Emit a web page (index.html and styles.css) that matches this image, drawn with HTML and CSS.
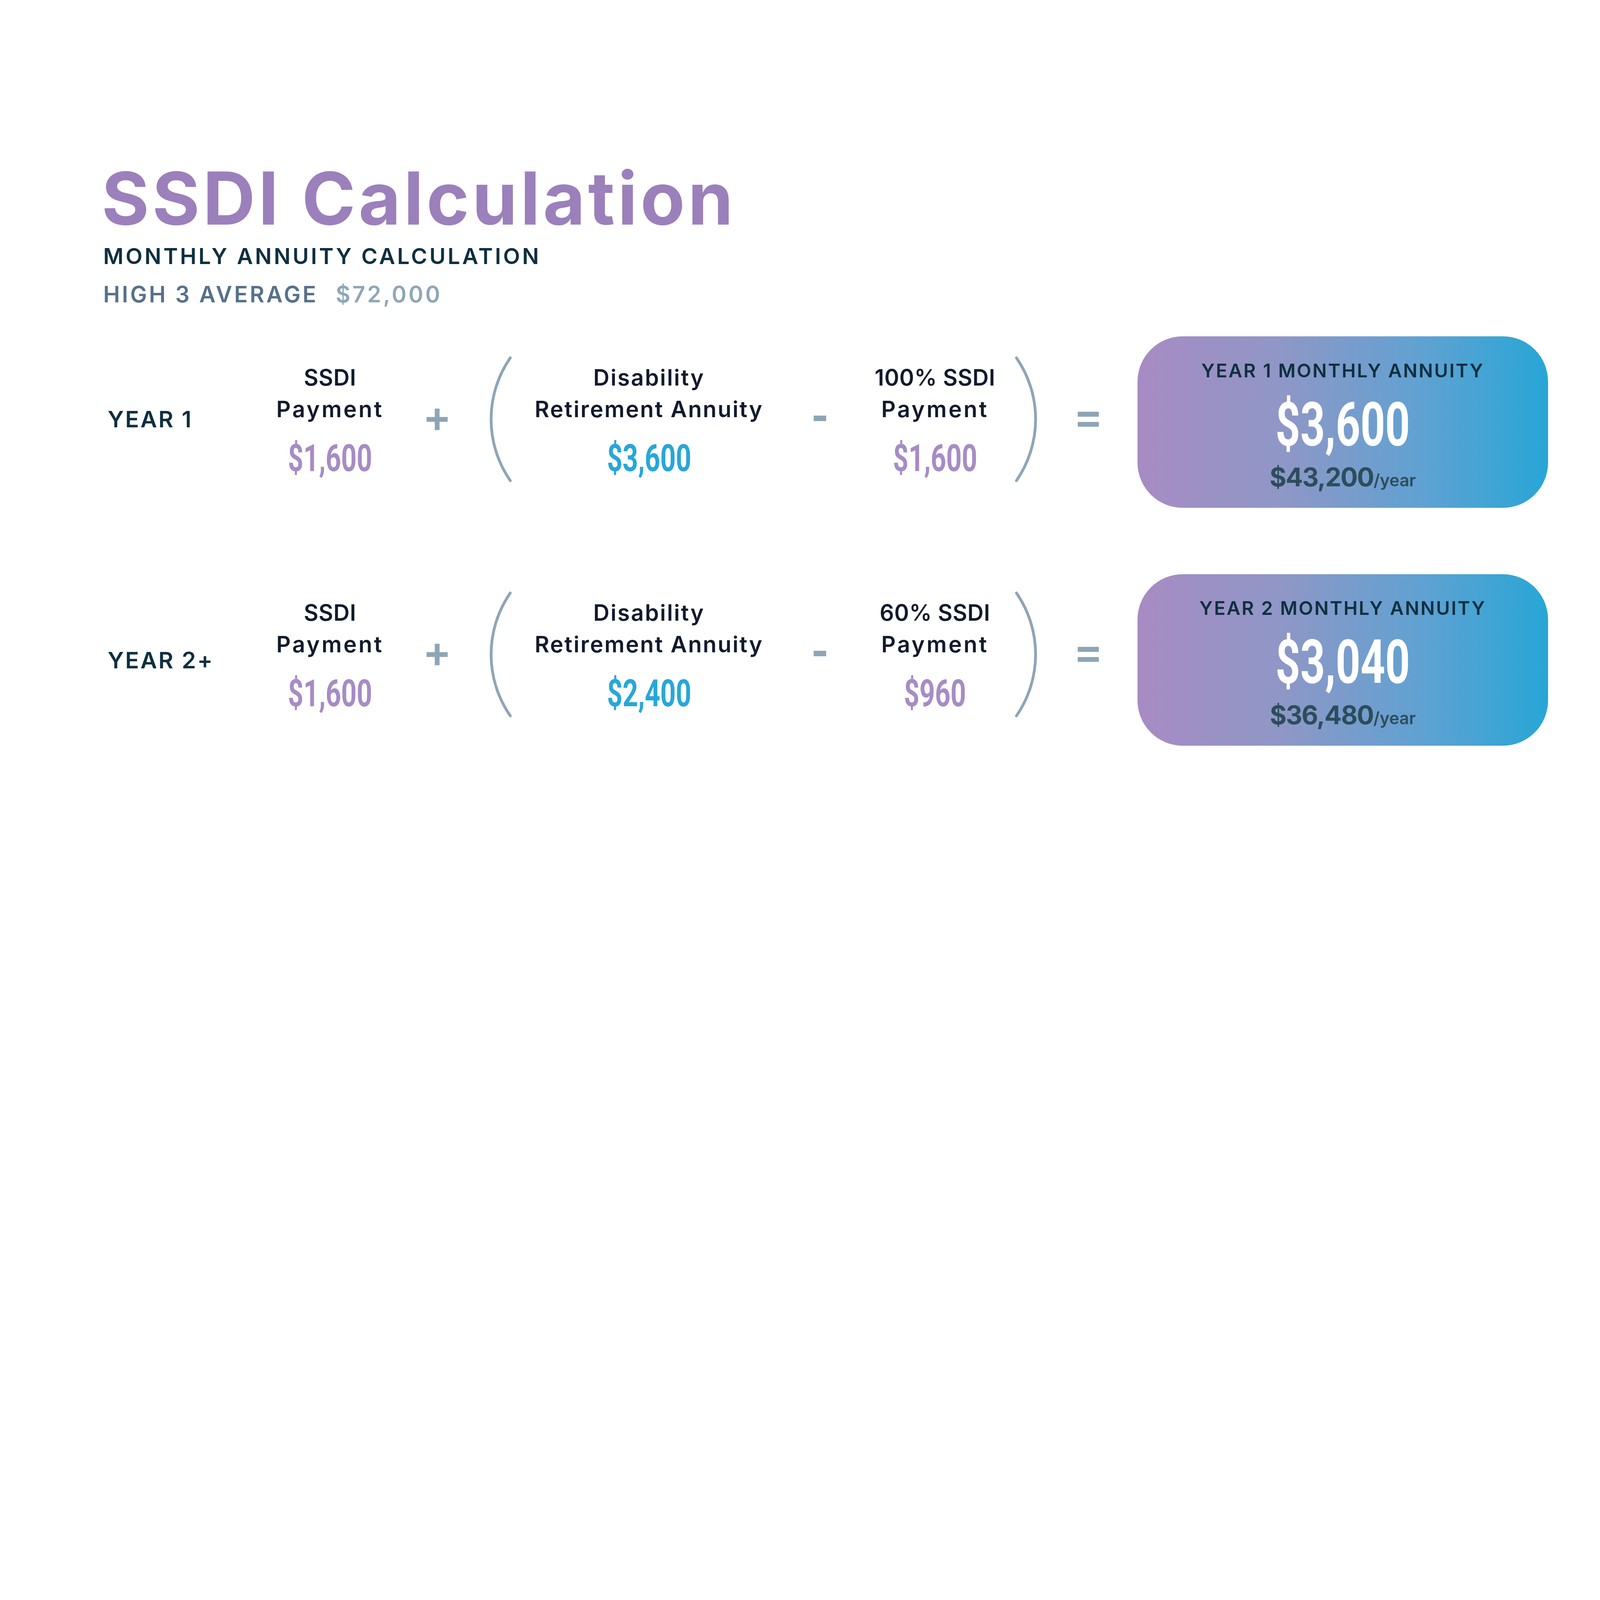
FILE: index.html
```html
<!DOCTYPE html>
<html lang="en">
<head>
<meta charset="utf-8">
<title>SSDI Calculation</title>
<link rel="stylesheet" href="styles.css">
</head>
<body>
<div class="page">
  <header class="header">
    <h1 class="title">SSDI Calculation</h1>
    <p class="subtitle">MONTHLY ANNUITY CALCULATION</p>
    <p class="high3"><span class="high3-label">HIGH 3 AVERAGE</span><span class="high3-value">$72,000</span></p>
  </header>

  <section class="rows">
    <div class="row row-first">
      <div class="year">YEAR 1</div>
      <div class="term term-ssdi">
        <div class="term-label"><span class="line line-tight">SSDI</span><span class="line line-wide">Payment</span></div>
        <div class="amount amount-purple"><span class="num">$1,600</span></div>
      </div>
      <div class="op op-plus">
        <svg viewBox="0 0 53 54"><rect x="0" y="21" width="53" height="12"/><rect x="20.5" y="0" width="12" height="54"/></svg>
      </div>
      <div class="op op-open">
        <svg viewBox="0 0 57 315"><path d="M52 4 A270 270 0 0 0 52 311"/></svg>
      </div>
      <div class="term term-dra">
        <div class="term-label"><span class="line">Disability</span><span class="line">Retirement Annuity</span></div>
        <div class="amount amount-blue"><span class="num">$3,600</span></div>
      </div>
      <div class="op op-minus"><span class="minus"></span></div>
      <div class="term term-offset">
        <div class="term-label"><span class="line line-tight">100% SSDI</span><span class="line line-wide">Payment</span></div>
        <div class="amount amount-purple"><span class="num">$1,600</span></div>
      </div>
      <div class="op op-close">
        <svg viewBox="0 0 57 315"><path d="M5 4 A270 270 0 0 1 5 311"/></svg>
      </div>
      <div class="op op-equals">
        <svg viewBox="0 0 53 38"><rect x="0" y="0" width="53" height="12.5"/><rect x="0" y="25.5" width="53" height="12"/></svg>
      </div>
      <div class="result">
        <div class="result-title">YEAR 1 MONTHLY ANNUITY</div>
        <div class="result-amount"><span class="num">$3,600</span></div>
        <div class="result-year">$43,200<span class="per">/year</span></div>
      </div>
    </div>

    <div class="row row-second">
      <div class="year">YEAR 2+</div>
      <div class="term term-ssdi">
        <div class="term-label"><span class="line line-tight">SSDI</span><span class="line line-wide">Payment</span></div>
        <div class="amount amount-purple"><span class="num">$1,600</span></div>
      </div>
      <div class="op op-plus">
        <svg viewBox="0 0 53 54"><rect x="0" y="21" width="53" height="12"/><rect x="20.5" y="0" width="12" height="54"/></svg>
      </div>
      <div class="op op-open">
        <svg viewBox="0 0 57 315"><path d="M52 4 A270 270 0 0 0 52 311"/></svg>
      </div>
      <div class="term term-dra">
        <div class="term-label"><span class="line">Disability</span><span class="line">Retirement Annuity</span></div>
        <div class="amount amount-blue"><span class="num">$2,400</span></div>
      </div>
      <div class="op op-minus"><span class="minus"></span></div>
      <div class="term term-offset">
        <div class="term-label"><span class="line line-tight">60% SSDI</span><span class="line line-wide">Payment</span></div>
        <div class="amount amount-purple"><span class="num">$960</span></div>
      </div>
      <div class="op op-close">
        <svg viewBox="0 0 57 315"><path d="M5 4 A270 270 0 0 1 5 311"/></svg>
      </div>
      <div class="op op-equals">
        <svg viewBox="0 0 53 38"><rect x="0" y="0" width="53" height="12.5"/><rect x="0" y="25.5" width="53" height="12"/></svg>
      </div>
      <div class="result">
        <div class="result-title">YEAR 2 MONTHLY ANNUITY</div>
        <div class="result-amount"><span class="num">$3,040</span></div>
        <div class="result-year">$36,480<span class="per">/year</span></div>
      </div>
    </div>
  </section>
</div>
</body>
</html>
```

FILE: styles.css
```css
/* 1rem = 1/400 of the slide width, so the slide scales with the window */
html {
  font-size: calc(100vw / 400);
  margin: 0;
  padding: 0;
  overflow: hidden;
}

body {
  margin: 0;
  padding: 0;
  width: 100vw;
  height: 56.25vw;
  background: #ffffff;
  font-family: Inter, "Noto Sans", "DejaVu Sans", sans-serif;
  overflow: hidden;
}

.page {
  box-sizing: border-box;
  padding: 40.4rem 0 0 25.4rem;
}

/* ---------- header ---------- */
.title {
  margin: 0;
  font-size: 18.2rem;
  line-height: 18.2rem;
  font-weight: 700;
  color: #9b80bb;
  letter-spacing: 0.04em;
}

.subtitle {
  margin: 2.7rem 0 0 0.4rem;
  font-size: 5.5rem;
  line-height: 5.5rem;
  font-weight: 600;
  letter-spacing: 0.095em;
  color: #0f2f3f;
}

.high3 {
  margin: 4rem 0 0 0.4rem;
  display: flex;
  font-size: 5.6rem;
  line-height: 5.6rem;
  font-weight: 600;
  letter-spacing: 0.09em;
}

.high3-label {
  color: #56718a;
}

.high3-value {
  margin-left: 4.4rem;
  color: #8ea7b8;
}

/* ---------- rows ---------- */
.rows {
  margin-top: 6.7rem;
  display: flex;
  flex-direction: column;
  gap: 15.3rem;
}

.row {
  display: flex;
  align-items: center;
  height: 43.5rem;
}

.year {
  box-sizing: border-box;
  width: 39.6rem;
  padding-left: 1.5rem;
  font-size: 5.7rem;
  line-height: 5.7rem;
  font-weight: 600;
  letter-spacing: 0.06em;
  color: #0f2f3f;
}

.row-second .year {
  margin-top: 2.8rem;
}

.term {
  display: flex;
  flex-direction: column;
  align-items: center;
  text-align: center;
}

.term-ssdi { width: 35rem; }
.term-dra { width: 60.5rem; }
.term-offset { width: 32.5rem; }

.term-label {
  font-size: 5.6rem;
  line-height: 7.9rem;
  font-weight: 600;
  letter-spacing: 0.05em;
  color: #121a2c;
}

.line {
  display: block;
  white-space: nowrap;
}

.line-tight { letter-spacing: 0.01em; }
.line-wide { letter-spacing: 0.08em; }

.amount {
  margin-top: 3.7rem;
  font-family: Roboto, "Liberation Sans", sans-serif;
  font-size: 9.4rem;
  line-height: 9.4rem;
  font-weight: 700;
}

.num {
  display: inline-block;
  transform: scaleX(0.72);
  transform-origin: center;
}

.amount-purple { color: #a68cc4; }
.amount-blue { color: #27a7d8; }

.op {
  display: flex;
  justify-content: center;
  align-items: center;
}

.op svg { display: block; }

.op-plus { width: 18.5rem; }
.op-open { width: 13.5rem; }
.op-minus { width: 25rem; }
.op-close { width: 12.9rem; }
.op-equals { width: 18.4rem; }

.op-plus svg { width: 5.3rem; height: 5.4rem; }
.op-open svg, .op-close svg { width: 5.7rem; height: 31.5rem; }
.op-equals svg { width: 5.3rem; height: 3.8rem; }

.op-plus svg, .op-equals svg {
  fill: #8ea5b6;
}

.op-open path, .op-close path {
  fill: none;
  stroke: #8ea5b6;
  stroke-width: 7;
  stroke-linecap: round;
}

.minus {
  display: block;
  width: 3.1rem;
  height: 1.4rem;
  background: #8ea5b6;
  margin-top: -0.5rem;
}

/* ---------- result card ---------- */
.result {
  box-sizing: border-box;
  width: 102.6rem;
  height: 42.9rem;
  margin-left: 3.1rem;
  margin-top: 1.4rem;
  padding-top: 6.2rem;
  border-radius: 11.3rem;
  background: linear-gradient(90deg, #a78bc3 0%, #8f97c6 35%, #5ea2d2 70%, #27a6d6 100%);
  display: flex;
  flex-direction: column;
  align-items: center;
}

.row-second .result {
  margin-top: 2.7rem;
}

.result-title {
  font-size: 4.7rem;
  line-height: 4.7rem;
  font-weight: 600;
  letter-spacing: 0.067em;
  color: #0f2f3f;
}

.result-amount {
  margin-top: 3.6rem;
  font-family: Roboto, "Liberation Sans", sans-serif;
  font-size: 15.2rem;
  line-height: 15.2rem;
  font-weight: 700;
  color: #ffffff;
}

.result-amount .num {
  transform: scaleX(0.71);
}

.result-year {
  margin-top: 2.3rem;
  font-size: 6.4rem;
  line-height: 6.4rem;
  font-weight: 700;
  letter-spacing: -0.03em;
  color: #2d4d5c;
}

.result-year .per {
  font-size: 4.2rem;
  font-weight: 600;
  letter-spacing: 0;
}
```
